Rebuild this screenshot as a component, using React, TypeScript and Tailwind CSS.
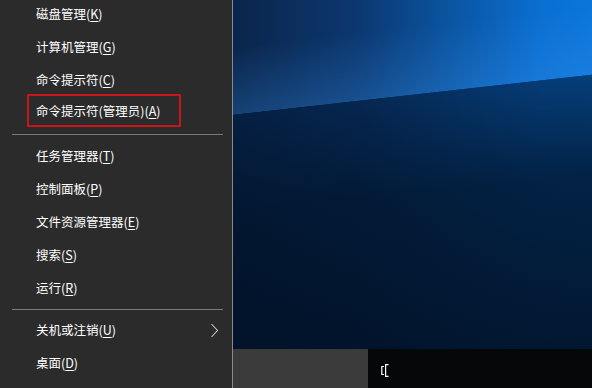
const MENU_GROUPS = [
  [
    { label: "磁盘管理", key: "K" },
    { label: "计算机管理", key: "G" },
    { label: "命令提示符", key: "C" },
    { label: "命令提示符(管理员)", key: "A", highlight: true },
  ],
  [
    { label: "任务管理器", key: "T" },
    { label: "控制面板", key: "P" },
    { label: "文件资源管理器", key: "E" },
    { label: "搜索", key: "S" },
    { label: "运行", key: "R" },
  ],
  [
    { label: "关机或注销", key: "U", submenu: true },
    { label: "桌面", key: "D" },
  ],
];

type Item = { label: string; key: string; highlight?: boolean; submenu?: boolean };

function Label({ item }: { item: Item }) {
  return (
    <span className="whitespace-nowrap">
      {item.label}(<span className="underline underline-offset-2 decoration-1">{item.key}</span>)
    </span>
  );
}

function MenuRow({ item }: { item: Item }) {
  return (
    <div className="flex h-[33px] items-center pl-[36px] pr-[12px]">
      {item.highlight ? (
        <div className="-ml-[9px] -mt-[3px] flex h-[33px] items-center self-start border-2 border-[#c8151b] pl-[7px] pr-[18px] pt-[2px]">
          <Label item={item} />
        </div>
      ) : (
        <Label item={item} />
      )}
      {item.submenu && (
        <svg className="ml-auto mr-[1px]" width="9" height="15" viewBox="0 0 9 15" fill="none">
          <path d="M1.5 1l6 6.5-6 6.5" stroke="#c8c8c8" strokeWidth="1.1" />
        </svg>
      )}
    </div>
  );
}

export default function App() {
  return (
    <div className="flex h-[388px] w-[592px] overflow-hidden bg-black font-['Noto_Sans_CJK_SC','Noto_Sans',sans-serif] text-[12.5px] text-white">
      {/* Win+X menu */}
      <div className="flex w-[233px] shrink-0 flex-col border-r border-[#8a8a8a] bg-[#2b2b2b] -mt-[2px]">
        {MENU_GROUPS.map((group, gi) => (
          <div key={gi}>
            {gi > 0 && (
              <div className={gi === 1 ? "pt-[4px] pb-[5px]" : "pt-[4px] pb-[4px]"}>
                <div className="ml-[12px] mr-[9px] h-px bg-[#7a7a7a]" />
              </div>
            )}
            {group.map((item) => (
              <MenuRow key={item.key} item={item} />
            ))}
          </div>
        ))}
      </div>

      {/* Desktop */}
      <div className="flex flex-1 flex-col">
        <div className="flex-1 bg-[linear-gradient(173.6deg,transparent_29.4%,rgba(2,26,58,0.6)_29.6%,rgba(1,20,44,0.85)_55%,rgba(1,16,36,0.93)_100%),linear-gradient(173.6deg,transparent_12%,rgba(60,150,240,0.25)_29.4%,transparent_29.5%),linear-gradient(to_right,#0a254b_0%,#0c3870_35%,#0b56a4_62%,#0a6fd2_86%,#0b76da_100%)]" />
        <div className="flex h-[39px] items-center bg-[#060709]">
          <div className="h-full w-[135px] bg-[#3b3b3b]" />
          <svg className="ml-[13px] mt-[3px]" width="8" height="13" viewBox="0 0 8 13" fill="none">
            <path d="M3 2.5H0.8v8H3" stroke="#fff" strokeWidth="1.2" />
            <path d="M7.5 0.6H4.6v11.8h2.9" stroke="#fff" strokeWidth="1.2" />
          </svg>
        </div>
      </div>
    </div>
  );
}
